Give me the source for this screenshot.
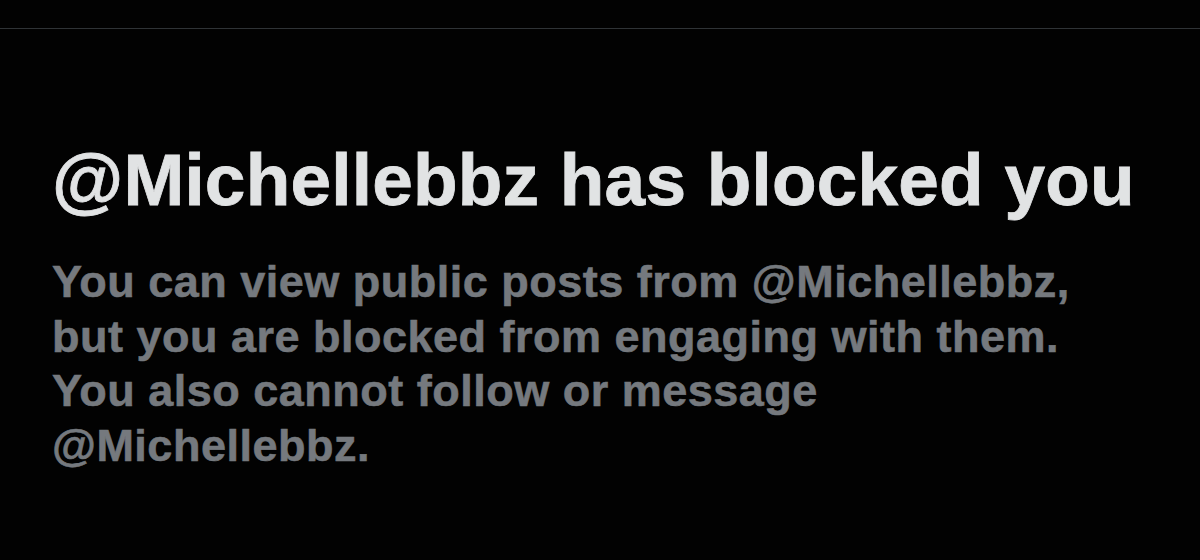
import React from "react";

export default function App() {
  return (
    <div
      className="w-[1200px] h-[560px] bg-[#020202] overflow-hidden"
      style={{ fontFamily: '"Liberation Sans", Arial, sans-serif' }}
    >
      <div className="h-[28px]" />
      <div className="h-px bg-[#2f3336]" />
      <div className="pl-[52px] pt-[107px]">
        <h1 className="text-[73px] leading-[88px] font-bold tracking-[0.2px] text-[#e1e3e4] whitespace-nowrap [-webkit-text-stroke:0.8px_currentColor]">
          @Michellebbz has blocked you
        </h1>
        <p className="mt-[31px] text-[45px] leading-[54.5px] font-bold tracking-[0.5px] text-[#75797e] whitespace-nowrap [-webkit-text-stroke:0.6px_currentColor]">
          <span className="block">You can view public posts from @Michellebbz,</span>
          <span className="block">but you are blocked from engaging with them.</span>
          <span className="block">You also cannot follow or message</span>
          <span className="block">@Michellebbz.</span>
        </p>
      </div>
    </div>
  );
}
